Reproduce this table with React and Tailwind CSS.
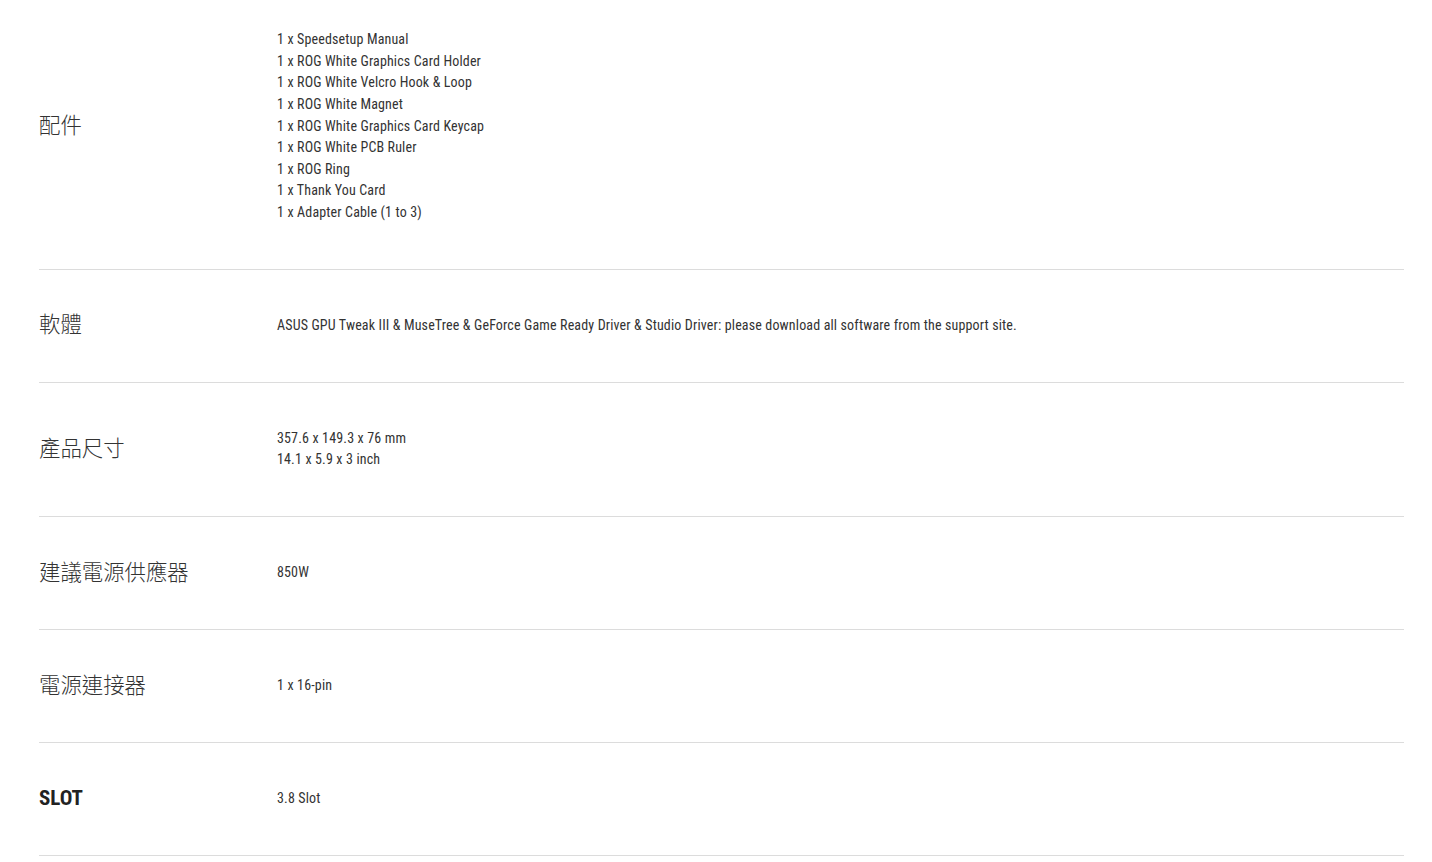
const rows = [
  {
    label: "配件",
    values: [
      "1 x Speedsetup Manual",
      "1 x ROG White Graphics Card Holder",
      "1 x ROG White Velcro Hook & Loop",
      "1 x ROG White Magnet",
      "1 x ROG White Graphics Card Keycap",
      "1 x ROG White PCB Ruler",
      "1 x ROG Ring",
      "1 x Thank You Card",
      "1 x Adapter Cable (1 to 3)",
    ],
  },
  {
    label: "軟體",
    values: [
      "ASUS GPU Tweak III & MuseTree & GeForce Game Ready Driver & Studio Driver: please download all software from the support site.",
    ],
  },
  { label: "產品尺寸", values: ["357.6 x 149.3 x 76 mm", "14.1 x 5.9 x 3 inch"] },
  { label: "建議電源供應器", values: ["850W"] },
  { label: "電源連接器", values: ["1 x 16-pin"] },
  { label: "SLOT", values: ["3.8 Slot"], latin: true },
];

export default function App() {
  return (
    <div className="min-h-screen bg-white pl-[39px] pr-[28px] overflow-hidden">
      <div className="-mt-[16px]">
        {rows.map((r) => (
          <div
            key={r.label}
            className="flex items-center border-b border-[#dcdcdc] py-[45.2px]"
          >
            <div className="w-[238px] shrink-0">
              {r.latin ? (
                <div className="-mt-[3px] font-['Roboto_Condensed',sans-serif] text-[21px] font-bold leading-[20px] text-[#222]">
                  {r.label}
                </div>
              ) : (
                <div className="-mt-[5px] font-['Noto_Sans_CJK_TC',sans-serif] text-[21.4px] font-light leading-[20px] text-[#333]">
                  {r.label}
                </div>
              )}
            </div>
            <ul className="font-['Roboto_Condensed',sans-serif] text-[14px] tracking-[0.15px] leading-[21.6px] text-[#333]">
              {r.values.map((v) => (
                <li key={v}>{v}</li>
              ))}
            </ul>
          </div>
        ))}
      </div>
    </div>
  );
}
